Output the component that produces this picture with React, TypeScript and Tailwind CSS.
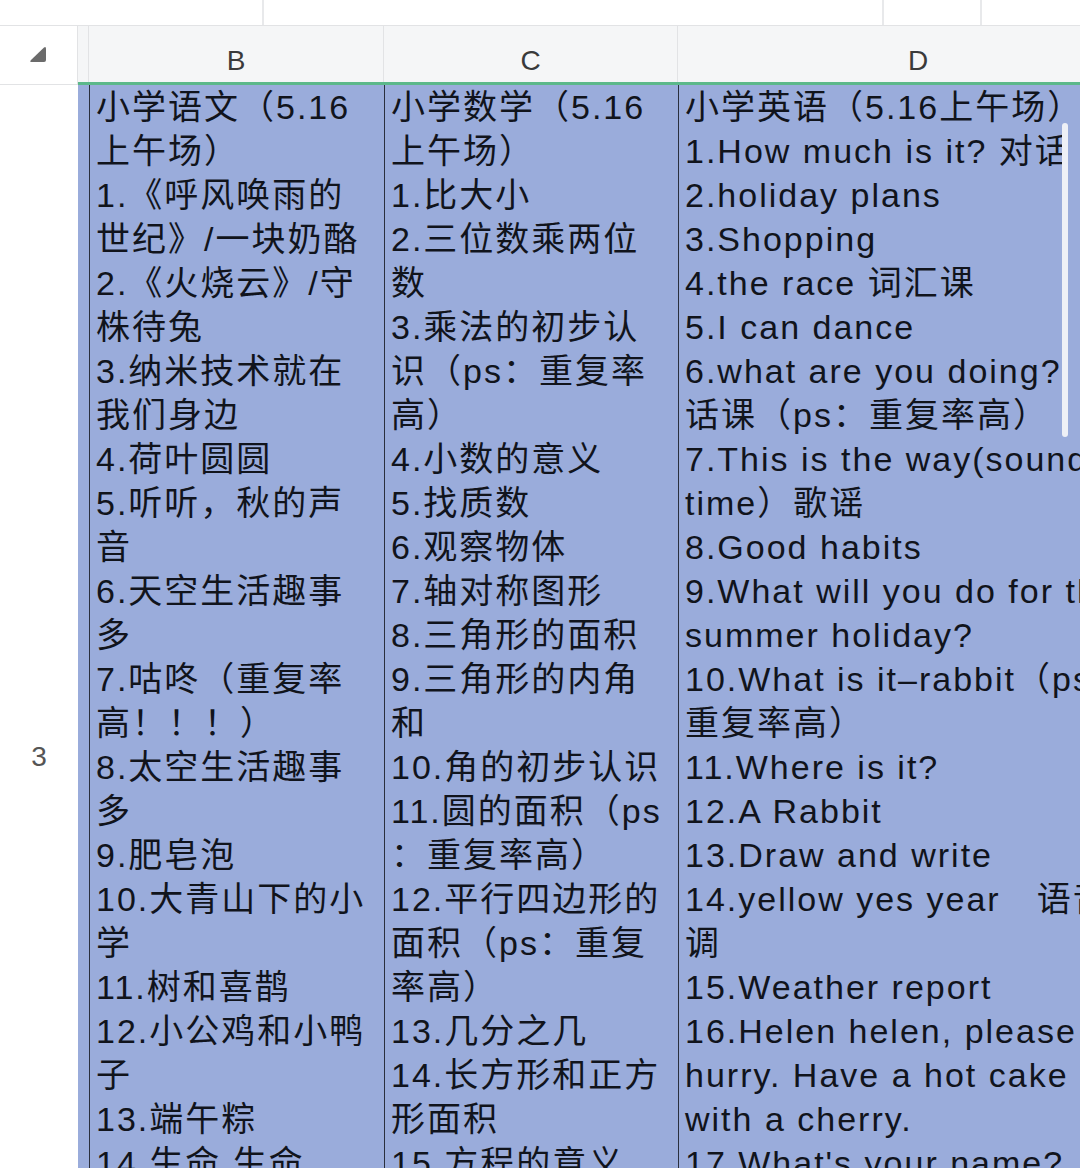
import React from "react";

const colB = [
  "小学语文（5.16",
  "上午场）",
  "1.《呼风唤雨的",
  "世纪》/一块奶酪",
  "2.《火烧云》/守",
  "株待兔",
  "3.纳米技术就在",
  "我们身边",
  "4.荷叶圆圆",
  "5.听听，秋的声",
  "音",
  "6.天空生活趣事",
  "多",
  "7.咕咚（重复率",
  "高！！！）",
  "8.太空生活趣事",
  "多",
  "9.肥皂泡",
  "10.大青山下的小",
  "学",
  "11.树和喜鹊",
  "12.小公鸡和小鸭",
  "子",
  "13.端午粽",
  "14.生命 生命",
];

const colC = [
  "小学数学（5.16",
  "上午场）",
  "1.比大小",
  "2.三位数乘两位",
  "数",
  "3.乘法的初步认",
  "识（ps：重复率",
  "高）",
  "4.小数的意义",
  "5.找质数",
  "6.观察物体",
  "7.轴对称图形",
  "8.三角形的面积",
  "9.三角形的内角",
  "和",
  "10.角的初步认识",
  "11.圆的面积（ps",
  "：重复率高）",
  "12.平行四边形的",
  "面积（ps：重复",
  "率高）",
  "13.几分之几",
  "14.长方形和正方",
  "形面积",
  "15.方程的意义",
];

const colD = [
  "小学英语（5.16上午场）",
  "1.How much is it? 对话",
  "2.holiday plans",
  "3.Shopping",
  "4.the race 词汇课",
  "5.I can dance",
  "6.what are you doing?",
  "话课（ps：重复率高）",
  "7.This is the way(sound",
  "time）歌谣",
  "8.Good habits",
  "9.What will you do for the",
  "summer holiday?",
  "10.What is it–rabbit（ps",
  "重复率高）",
  "11.Where is it?",
  "12.A Rabbit",
  "13.Draw and write",
  "14.yellow yes year　语音",
  "调",
  "15.Weather report",
  "16.Helen helen, please",
  "hurry. Have a hot cake",
  "with a cherry.",
  "17.What's your name?",
];

const Cell = ({ lines, className }: { lines: string[]; className: string }) => (
  <div className={`${className} h-full shrink-0 overflow-hidden border-l border-[#2a2f3d] pl-[6px]`}>
    {lines.map((l, i) => (
      <div key={i} className="h-[44px] whitespace-pre leading-[44px]">
        {l}
      </div>
    ))}
  </div>
);

export default function App() {
  return (
    <div
      className="relative h-[1168px] w-[1080px] overflow-hidden bg-white"
      style={{ fontFamily: '"Liberation Sans", "Noto Sans CJK SC", sans-serif' }}
    >
      {/* toolbar strip */}
      <div className="flex h-[26px] border-b border-[#e2e3e5]">
        <div className="w-[264px] shrink-0 border-r-2 border-[#e8e9eb]" />
        <div className="w-[620px] shrink-0 border-r-2 border-[#e8e9eb]" />
        <div className="w-[98px] shrink-0 border-r-2 border-[#e8e9eb]" />
        <div className="flex-1" />
      </div>

      {/* column header */}
      <div className="flex h-[59px]">
        <div className="flex w-[78px] shrink-0 items-center justify-center border-b border-r border-[#e2e3e5] bg-white">
          <svg width="18" height="17" viewBox="0 0 18 17" className="ml-[-2px] mt-[-1px]">
            <path d="M15 1.5 Q17 0 17 3 L17 14 Q17 16 15 16 L3 16 Q0 16 2 14 Z" fill="#6b6b6b" />
          </svg>
        </div>
        <div className="flex min-w-0 flex-1 border-b-[3px] border-[#5cb88a] bg-[#f5f6f7] text-[28px] text-[#3a3a3a]">
          <div className="w-[11px] shrink-0 border-r border-[#e2e3e5]" />
          <div className="flex w-[295px] shrink-0 items-center justify-center border-r border-[#e2e3e5] pt-[13px]">B</div>
          <div className="flex w-[294px] shrink-0 items-center justify-center border-r border-[#e2e3e5] pt-[13px]">C</div>
          <div className="flex w-[480px] shrink-0 items-center justify-center pt-[13px]">D</div>
        </div>
      </div>

      {/* row 3 */}
      <div className="flex h-[1346px]">
        <div className="flex w-[78px] shrink-0 items-center justify-center bg-white pb-[2px] text-[28px] text-[#555]">3</div>
        <div className="flex min-w-0 flex-1 bg-[#9aacdb] text-[34px] tracking-[2px] text-[#11141c]">
          <div className="w-[11px] shrink-0" />
          <Cell lines={colB} className="w-[295px]" />
          <Cell lines={colC} className="w-[294px]" />
          <Cell lines={colD} className="w-[480px]" />
        </div>
      </div>

      {/* scrollbar */}
      <div className="absolute left-[1062px] top-[123px] h-[314px] w-[6px] rounded-full bg-[#eef0f6]" />
    </div>
  );
}
